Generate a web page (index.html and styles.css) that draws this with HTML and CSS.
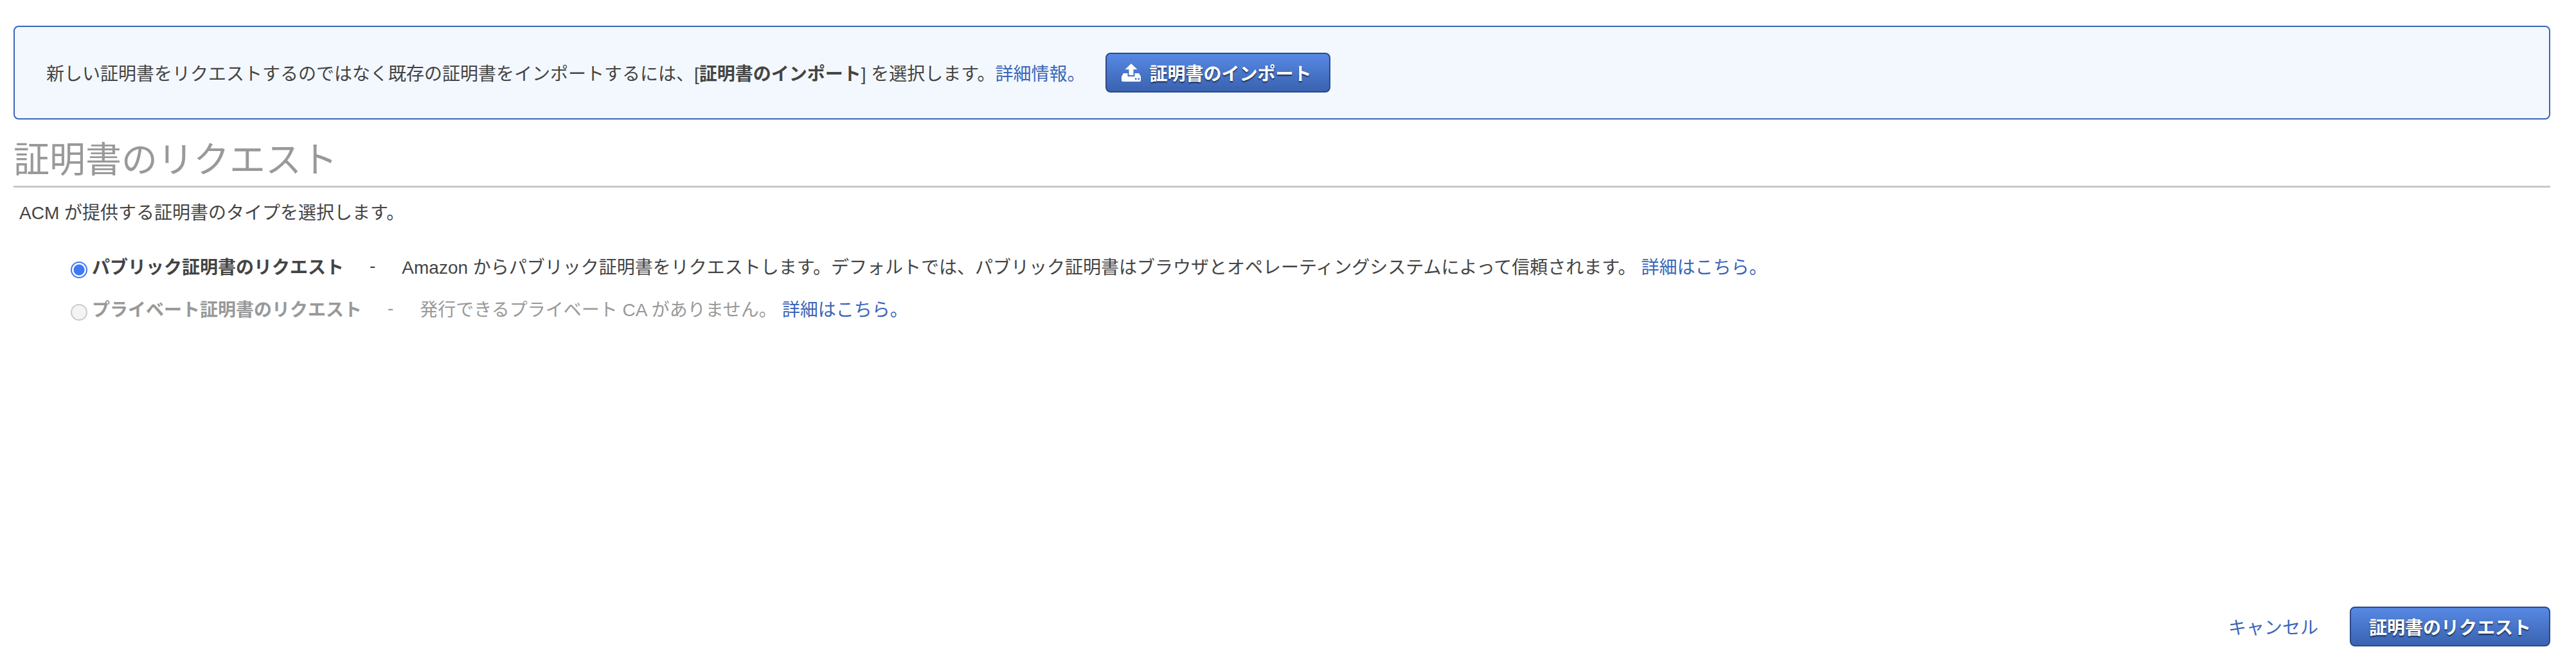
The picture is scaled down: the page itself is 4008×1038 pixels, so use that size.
FILE: index.html
```html
<!DOCTYPE html>
<html lang="ja">
<head>
  <meta charset="UTF-8">
  <title>証明書のリクエスト</title>
  <link rel="stylesheet" href="styles.css">
</head>
<body>

<div class="notice">
  <p>新しい証明書をリクエストするのではなく既存の証明書をインポートするには、[<b>証明書のインポート</b>] を選択します。<a href="#">詳細情報。</a></p>
  <button type="button" class="btn btn-import">
    <svg class="icon" viewBox="0 0 30 28" width="30" height="28">
      <path fill="#fff" d="M15 0 L24.5 9 H18.5 V18 H11.5 V9 H5.5 Z"/>
      <path fill="#fff" fill-rule="evenodd" d="M3 15 H9.5 V20 H20.5 V15 H27 L30 20 V26 Q30 28 28 28 H2 Q0 28 0 26 V20 Z M21 22.5 H23.5 V25 H21 Z M25.5 22.5 H28 V25 H25.5 Z"/>
    </svg>
    証明書のインポート
  </button>
</div>

<h1>証明書のリクエスト</h1>
<p class="intro">ACM が提供する証明書のタイプを選択します。</p>

<div class="options">
  <div class="option">
    <input type="radio" name="type" id="type_public" checked>
    <label for="type_public">パブリック証明書のリクエスト</label>
    <span class="dash">-</span>
    <span>Amazon からパブリック証明書をリクエストします。デフォルトでは、パブリック証明書はブラウザとオペレーティングシステムによって信頼されます。</span>
    <a href="#" class="more">詳細はこちら。</a>
  </div>
  <div class="option disabled">
    <input type="radio" name="type" id="type_private" disabled>
    <label for="type_private">プライベート証明書のリクエスト</label>
    <span class="dash">-</span>
    <span>発行できるプライベート CA がありません。</span>
    <a href="#" class="more">詳細はこちら。</a>
  </div>
</div>

<div class="actions">
  <a href="#" class="cancel">キャンセル</a>
  <button type="button" class="btn btn-submit">証明書のリクエスト</button>
</div>

</body>
</html>
```

FILE: styles.css
```css
* {
  box-sizing: border-box;
}
body {
  font-family: "Liberation Sans", "Noto Sans CJK JP", sans-serif;
  font-size: 28px;
  color: #444;
  margin: 0;
  padding: 40px 40px 32px 21px;
  min-height: 100vh;
  display: flex;
  flex-direction: column;
  background-color: #fff;
}
a {
  color: #3b66b8;
  text-decoration: none;
}
p {
  margin: 0;
}
.notice {
  display: flex;
  align-items: center;
  height: 146px;
  padding-left: 49px;
  background-color: #f3f8fe;
  border: 2px solid #3b66b8;
  border-radius: 8px;
}
.btn {
  font-family: inherit;
  font-size: 28px;
  font-weight: bold;
  color: #fff;
  height: 62px;
  border: 2px solid #2c4a88;
  border-radius: 8px;
  background: linear-gradient(#5789e4, #3a62b0);
  text-shadow: 0 2px 2px rgba(0, 0, 0, 0.6);
  cursor: pointer;
}
.btn-import {
  display: flex;
  align-items: center;
  width: 350px;
  margin-left: 31px;
  padding: 0 0 0 23px;
}
.icon {
  margin-right: 14px;
}
h1 {
  font-size: 56px;
  font-weight: normal;
  line-height: 78px;
  color: #999;
  margin: 24px 0 0;
  padding-bottom: 1px;
  border-bottom: 3px solid #c8c8c8;
}
.intro {
  margin: 20px 0 0 9px;
  line-height: 40px;
}
.options {
  margin-top: 29px;
  padding-left: 89px;
}
.option {
  display: flex;
  align-items: center;
  height: 66px;
}
.option input {
  appearance: none;
  flex-shrink: 0;
  width: 26px;
  height: 26px;
  margin: 11px 7px 0 0;
  border: 2px solid #3f78f5;
  border-radius: 50%;
  background: radial-gradient(circle, #3f78f5 0 8px, #fff 9px);
}
.option input:disabled {
  border-color: #ccc;
  background: #f4f4f4;
}
.option label {
  font-weight: bold;
}
.dash {
  margin: 0 41px 0 40px;
}
.more {
  margin-left: 8px;
}
.disabled {
  color: #999;
}
.actions {
  margin-top: auto;
  display: flex;
  align-items: center;
  justify-content: flex-end;
}
.cancel {
  margin-right: 49px;
}
.btn-submit {
  width: 312px;
  padding: 0;
}
```
